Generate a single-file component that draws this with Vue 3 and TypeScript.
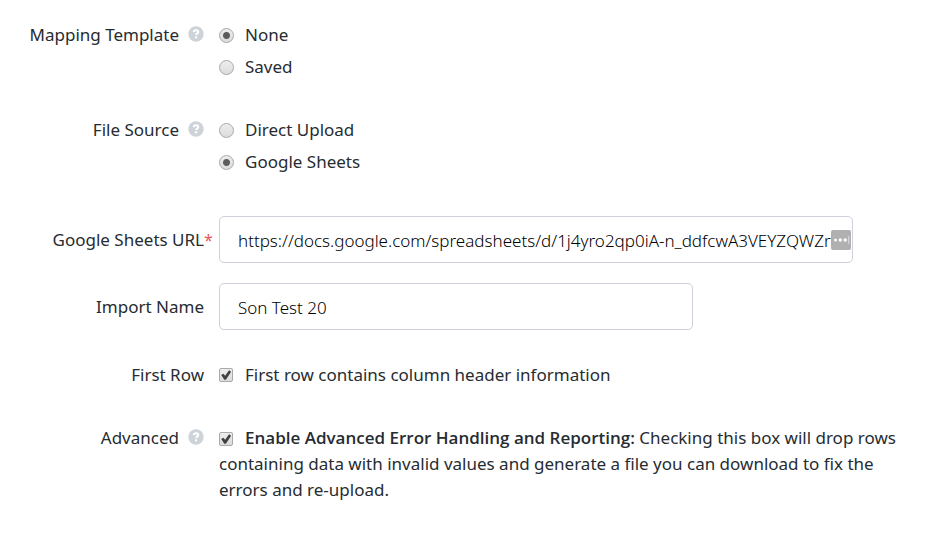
<script setup lang="ts">
import { ref } from 'vue'

const template = ref<string>('none')
const source = ref<string>('sheets')
const url = ref<string>('https://docs.google.com/spreadsheets/d/1j4yro2qp0iA-n_ddfcwA3VEYZQWZr')
const importName = ref<string>('Son Test 20')
const firstRow = ref<boolean>(true)
const advanced = ref<boolean>(true)
</script>

<template>
  <form class="form" @submit.prevent>
    <div class="row" role="radiogroup" aria-labelledby="template-label">
      <div class="label">
        <span id="template-label">Mapping Template</span>
        <svg class="help" viewBox="0 0 16 16" aria-hidden="true">
          <circle cx="8" cy="8" r="7.7" />
          <path d="M5.7 6.1C5.8 4.8 6.8 4.2 8 4.2s2.3.7 2.3 1.9c0 1.5-2.2 1.5-2.2 3" />
          <rect x="7" y="10.3" width="2.1" height="2" />
        </svg>
      </div>
      <div class="options">
        <label class="option"><input v-model="template" type="radio" name="template" value="none" />None</label>
        <label class="option"><input v-model="template" type="radio" name="template" value="saved" />Saved</label>
      </div>
    </div>

    <div class="row source" role="radiogroup" aria-labelledby="source-label">
      <div class="label">
        <span id="source-label">File Source</span>
        <svg class="help" viewBox="0 0 16 16" aria-hidden="true">
          <circle cx="8" cy="8" r="7.7" />
          <path d="M5.7 6.1C5.8 4.8 6.8 4.2 8 4.2s2.3.7 2.3 1.9c0 1.5-2.2 1.5-2.2 3" />
          <rect x="7" y="10.3" width="2.1" height="2" />
        </svg>
      </div>
      <div class="options">
        <label class="option"><input v-model="source" type="radio" name="source" value="upload" />Direct Upload</label>
        <label class="option"><input v-model="source" type="radio" name="source" value="sheets" />Google Sheets</label>
      </div>
    </div>

    <div class="row field">
      <label class="label" for="sheet-url">Google Sheets URL<span class="required">*</span></label>
      <div class="url-box">
        <input id="sheet-url" v-model="url" class="text" type="text" />
        <svg class="fill-badge" viewBox="0 0 20 20" aria-hidden="true">
          <rect width="20" height="20" rx="2" class="plate" />
          <circle cx="4.5" cy="10" r="1.5" />
          <circle cx="9.3" cy="10" r="1.7" />
          <circle cx="14.2" cy="10" r="1.7" />
          <rect x="17.3" y="6" width="1" height="8" opacity="0.6" />
        </svg>
      </div>
    </div>

    <div class="row field name">
      <label class="label" for="import-name">Import Name</label>
      <input id="import-name" v-model="importName" class="text" type="text" />
    </div>

    <div class="row first">
      <div class="label">First Row</div>
      <label class="option"><input v-model="firstRow" type="checkbox" />First row contains column header information</label>
    </div>

    <div class="row advanced">
      <div class="label">
        <span>Advanced</span>
        <svg class="help" viewBox="0 0 16 16" aria-hidden="true">
          <circle cx="8" cy="8" r="7.7" />
          <path d="M5.7 6.1C5.8 4.8 6.8 4.2 8 4.2s2.3.7 2.3 1.9c0 1.5-2.2 1.5-2.2 3" />
          <rect x="7" y="10.3" width="2.1" height="2" />
        </svg>
      </div>
      <label class="paragraph"><input v-model="advanced" type="checkbox" /><strong>Enable Advanced Error Handling and Reporting:</strong> Checking this box will drop rows containing data with invalid values and generate a file you can download to fix the errors and re-upload.</label>
    </div>
  </form>
</template>

<style>
body {
  margin: 0;
  background: #fff;
}
</style>

<style scoped>
.form {
  padding: 19px 32px 24px 15px;
  font-family: "Noto Sans", "Open Sans", sans-serif;
  font-size: 17px;
  font-weight: 400;
  line-height: 32px;
  color: #262c31;
}

.row {
  display: grid;
  grid-template-columns: 189px minmax(0, 1fr);
  column-gap: 15px;
}

.source {
  margin-top: 31px;
}

.field {
  align-items: center;
  margin-top: 38px;
}

.name {
  margin-top: 20px;
}

.first {
  margin-top: 29px;
}

.advanced {
  margin-top: 34px;
  line-height: 26px;
}

.label {
  display: flex;
  justify-content: flex-end;
  white-space: nowrap;
}

.help {
  width: 16px;
  height: 16px;
  margin: 7px 0 0 9px;
  fill: #ced3da;
}

.advanced .help {
  margin-top: 4px;
}

.help path {
  fill: none;
  stroke: #fff;
  stroke-width: 2;
}

.help rect {
  fill: #fff;
}

.required {
  width: 8px;
  margin-right: -8px;
  font-size: 16px;
  color: #f0555a;
}

.option {
  display: flex;
  align-items: center;
}

input[type="radio"],
input[type="checkbox"] {
  appearance: none;
  box-sizing: border-box;
  flex: none;
  border: 1px solid #a9a9a9;
  background: linear-gradient(#ededed, #dcdcdc);
}

input[type="radio"] {
  width: 15px;
  height: 15px;
  margin: 0 11px 0 0;
  border-radius: 50%;
}

input[type="radio"]:checked {
  background: radial-gradient(circle, #5c5c5c 0 3px, transparent 4px), linear-gradient(#ededed, #dcdcdc);
}

input[type="checkbox"] {
  width: 14px;
  height: 14px;
  margin: 0 12px 0 0;
  border-radius: 2px;
}

input[type="checkbox"]:checked::before {
  display: block;
  width: 12px;
  height: 12px;
  content: "";
  background: #404040;
  clip-path: polygon(10% 50%, 27% 40%, 43% 57%, 75% 10%, 93% 22%, 49% 90%, 36% 90%);
}

.paragraph input[type="checkbox"] {
  vertical-align: -2px;
}

strong {
  font-family: "Open Sans", "Noto Sans", sans-serif;
  font-weight: 650;
}

.text {
  box-sizing: border-box;
  width: 100%;
  max-width: 474px;
  height: 47px;
  padding: 1px 18px 0;
  border: 1px solid #ced0da;
  border-radius: 5px;
  outline: 0;
  background: #fff;
  font: inherit;
  font-weight: 300;
  color: #000;
}

.url-box {
  position: relative;
  max-width: 634px;
}

.url-box .text {
  display: block;
  max-width: none;
}

.fill-badge {
  position: absolute;
  top: 14px;
  right: 2px;
  width: 20px;
  height: 20px;
  fill: #fff;
}

.fill-badge .plate {
  fill: #b0b0b0;
}
</style>
